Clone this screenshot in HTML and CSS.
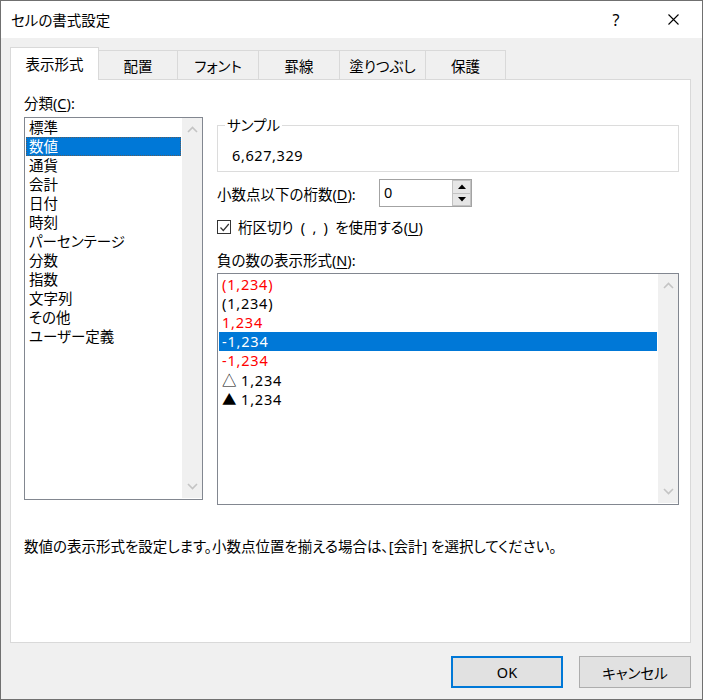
FILE: index.html
```html
<html>
  <head>
    <title>セルの書式設定</title>
    <meta charset="utf-8" />
    <link rel="stylesheet" href="styles.css">
  </head>
  <body>
    <div class="dialog">
      <!-- タイトルバー -->
      <div class="titlebar">
        <span class="title">セルの書式設定</span>
        <span class="tb-btn help">?</span>
        <span class="tb-btn close">
          <svg width="11" height="11" viewBox="0 0 11 11"><path d="M0.5 0.5 L10.5 10.5 M10.5 0.5 L0.5 10.5" stroke="#000" stroke-width="1.1" fill="none"/></svg>
        </span>
      </div>

      <div class="body">
        <!-- タブ -->
        <div class="tabs">
          <div class="tab active t1">表示形式</div>
          <div class="tab t2">配置</div>
          <div class="tab t3">フォント</div>
          <div class="tab t4">罫線</div>
          <div class="tab t5">塗りつぶし</div>
          <div class="tab t6">保護</div>
        </div>

        <div class="panel">
          <div class="cols">
            <div class="left">
              <div class="label">分類(<u>C</u>):</div>
              <div class="listbox cat">
                <ul class="items">
                  <li>標準</li>
                  <li class="selected">数値</li>
                  <li>通貨</li>
                  <li>会計</li>
                  <li>日付</li>
                  <li>時刻</li>
                  <li>パーセンテージ</li>
                  <li>分数</li>
                  <li>指数</li>
                  <li>文字列</li>
                  <li>その他</li>
                  <li>ユーザー定義</li>
                </ul>
                <div class="vscroll">
                  <svg width="11" height="7" viewBox="0 0 11 7"><polyline points="1,6 5.5,1.5 10,6" stroke="#c4c4c4" stroke-width="1.6" fill="none"/></svg>
                  <svg width="11" height="7" viewBox="0 0 11 7"><polyline points="1,1 5.5,5.5 10,1" stroke="#c4c4c4" stroke-width="1.6" fill="none"/></svg>
                </div>
              </div>
            </div>

            <div class="right">
              <fieldset class="sample">
                <legend>サンプル</legend>
                <div class="sample-value">6,627,329</div>
              </fieldset>

              <div class="decimals">
                <span class="decimals-label">小数点以下の桁数(<u>D</u>):</span>
                <div class="spinner">
                  <span class="spin-value">0</span>
                  <div class="spin-btns">
                    <span class="spin">
                      <svg width="8" height="5" viewBox="0 0 8 5"><polygon points="0,5 4,0.5 8,5" fill="#000"/></svg>
                    </span>
                    <span class="spin">
                      <svg width="8" height="5" viewBox="0 0 8 5"><polygon points="0,0 8,0 4,4.5" fill="#000"/></svg>
                    </span>
                  </div>
                </div>
              </div>

              <div class="check-row">
                <span class="checkbox">
                  <svg width="11" height="11" viewBox="0 0 11 11"><polyline points="1.5,5.5 4.3,8.5 9.8,2" stroke="#333" stroke-width="1.2" fill="none"/></svg>
                </span>
                <span>桁区切り&ensp;(&ensp;,&ensp;)&ensp;を使用する(<u>U</u>)</span>
              </div>

              <div class="label neg-label">負の数の表示形式(<u>N</u>):</div>
              <div class="listbox neg">
                <ul class="items">
                  <li class="red">(1,234)</li>
                  <li>(1,234)</li>
                  <li class="red">1,234</li>
                  <li class="selected">-1,234</li>
                  <li class="red">-1,234</li>
                  <li><span class="tri">△</span> 1,234</li>
                  <li><span class="tri">▲</span> 1,234</li>
                </ul>
                <div class="vscroll">
                  <svg width="11" height="7" viewBox="0 0 11 7"><polyline points="1,6 5.5,1.5 10,6" stroke="#c4c4c4" stroke-width="1.6" fill="none"/></svg>
                  <svg width="11" height="7" viewBox="0 0 11 7"><polyline points="1,1 5.5,5.5 10,1" stroke="#c4c4c4" stroke-width="1.6" fill="none"/></svg>
                </div>
              </div>
            </div>
          </div>

          <p class="desc">数値の表示形式を設定します。小数点位置を揃える場合は、[会計] を選択してください。</p>
        </div>

        <div class="buttons">
          <button class="btn default">OK</button>
          <button class="btn">キャンセル</button>
        </div>
      </div>
    </div>
  </body>
</html>
```

FILE: styles.css
```css
  html, body {
    margin: 0px;
    width: 703px;
    height: 700px;
    overflow: hidden;
  }

  body {
    font-family: "Noto Sans", "Noto Sans CJK JP", sans-serif;
    font-size: 14.5px;
    font-feature-settings: "palt";
    color: #000;
  }

  u {
    text-decoration: underline;
    text-underline-offset: 2px;
  }

  .dialog {
    box-sizing: border-box;
    width: 703px;
    height: 700px;
    border: 1px solid #707070;
    display: flex;
    flex-direction: column;
    background-color: #f0f0f0;
  }

  /* タイトルバー */
  .titlebar {
    height: 37px;
    flex: none;
    display: flex;
    align-items: center;
    padding: 0 6px 0 10px;
    background-color: #fff;
  }

  .title {
    flex: 1;
    line-height: 20px;
  }

  .tb-btn {
    width: 46px;
    height: 37px;
    display: flex;
    align-items: center;
    justify-content: center;
  }

  .help {
    font-size: 16px;
  }

  .close {
    margin-left: 11px;
  }

  .body {
    flex: 1;
    display: flex;
    flex-direction: column;
    padding: 9px 11px 0 9px;
  }

  /* タブ */
  .tabs {
    height: 32px;
    display: flex;
    align-items: flex-end;
  }

  .tab {
    box-sizing: border-box;
    height: 29px;
    border: 1px solid #d9d9d9;
    border-bottom: none;
    border-left: none;
    text-align: center;
    line-height: 20px;
    padding-top: 5px;
    background-color: #f0f0f0;
  }

  .tab.active {
    position: relative;
    z-index: 1;
    height: 33px;
    margin-bottom: -1px;
    padding-top: 6px;
    border-left: 1px solid #d9d9d9;
    background-color: #fff;
  }

  .t1 { width: 89px; }
  .t2 { width: 79px; }
  .t3 { width: 81px; }
  .t4 { width: 81px; }
  .t5 { width: 86px; }
  .t6 { width: 80px; }

  .panel {
    box-sizing: border-box;
    height: 564px;
    border: 1px solid #d9d9d9;
    background-color: #fff;
    padding: 13px 11px 0 13px;
  }

  .cols {
    display: flex;
    gap: 14px;
  }

  .label {
    line-height: 20px;
  }

  .left {
    width: 179px;
  }

  .right {
    width: 462px;
    padding-top: 22px;
  }

  /* リストボックス */
  .listbox {
    box-sizing: border-box;
    border: 1px solid #828790;
    display: flex;
    background-color: #fff;
  }

  .listbox.cat {
    margin-top: 4px;
    height: 383px;
  }

  .items {
    flex: 1;
    list-style-type: none;
    margin: 0;
    padding: 0 0 0 1px;
  }

  .items li {
    height: 19px;
    line-height: 19px;
    padding-left: 3px;
    white-space: nowrap;
  }

  .items li.selected {
    background-color: #0078d7;
    color: #fff;
    outline: 1px dotted #5c5c5c;
    outline-offset: -1px;
  }

  .neg .items li {
    letter-spacing: 0.8px;
  }

  .neg .items li.selected {
    outline: none;
  }

  .items li.red {
    color: #ff0000;
  }

  .tri {
    font-family: "Noto Sans CJK JP", sans-serif;
    letter-spacing: 0;
  }

  .vscroll {
    width: 20px;
    margin: 0 0 1px 1px;
    background-color: #f0f0f0;
    display: flex;
    flex-direction: column;
    justify-content: space-between;
    align-items: center;
    padding: 8px 0 8px;
  }

  /* サンプル */
  .sample {
    margin: 0;
    padding: 0 0 0 7px;
    border: 1px solid #dcdcdc;
    min-width: 0;
  }

  .sample legend {
    padding: 0 2px;
    line-height: 20px;
  }

  .sample-value {
    line-height: 20px;
    margin: 10px 0 6px 7px;
    letter-spacing: 0.6px;
  }

  .decimals {
    display: flex;
    align-items: center;
    margin-top: 7px;
  }

  .decimals-label {
    width: 162px;
    line-height: 20px;
    padding-top: 2px;
  }

  .spinner {
    box-sizing: border-box;
    width: 93px;
    height: 28px;
    border: 1px solid #a3a3a3;
    display: flex;
    background-color: #fff;
  }

  .spin-value {
    flex: 1;
    line-height: 24px;
    padding-left: 4px;
  }

  .spin-btns {
    width: 19px;
    display: flex;
    flex-direction: column;
  }

  .spin {
    flex: 1;
    box-sizing: border-box;
    border: 1px solid #c2c2c2;
    background-color: #e6e6e6;
    display: flex;
    align-items: center;
    justify-content: center;
  }

  .spin + .spin {
    border-top: none;
  }

  .check-row {
    display: flex;
    align-items: center;
    line-height: 20px;
    margin-top: 10px;
  }

  .checkbox {
    box-sizing: border-box;
    width: 14px;
    height: 14px;
    border: 1px solid #333;
    background-color: #fff;
    display: flex;
    align-items: center;
    justify-content: center;
    margin-right: 7px;
  }

  .neg-label {
    margin-top: 13px;
  }

  .listbox.neg {
    margin-top: 3px;
    height: 232px;
  }

  .neg .items {
    padding-top: 1px;
  }

  .desc {
    margin: 31px 0 0 0;
    line-height: 20px;
  }

  /* ボタン */
  .buttons {
    display: flex;
    justify-content: flex-end;
    gap: 16px;
    margin-top: 13px;
  }

  .btn {
    box-sizing: border-box;
    width: 112px;
    height: 32px;
    border: 1px solid #adadad;
    background-color: #e1e1e1;
    font-family: "Noto Sans", "Noto Sans CJK JP", sans-serif;
    font-size: 14.5px;
    font-feature-settings: "palt";
    color: #000;
    padding: 0;
  }

  .btn.default {
    border: 2px solid #0078d7;
  }
```
